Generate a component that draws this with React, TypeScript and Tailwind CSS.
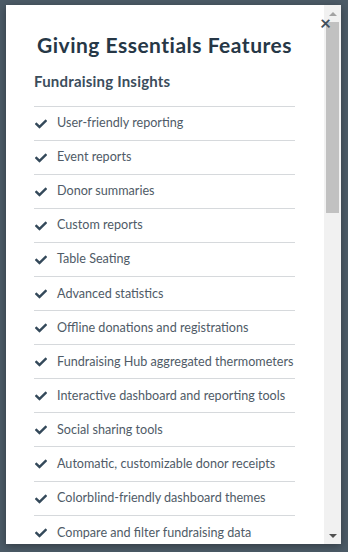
import React from "react";

const insights = [
  "User-friendly reporting",
  "Event reports",
  "Donor summaries",
  "Custom reports",
  "Table Seating",
  "Advanced statistics",
  "Offline donations and registrations",
  "Fundraising Hub aggregated thermometers",
  "Interactive dashboard and reporting tools",
  "Social sharing tools",
  "Automatic, customizable donor receipts",
  "Colorblind-friendly dashboard themes",
  "Compare and filter fundraising data",
];

function Check() {
  return (
    <svg viewBox="0 0 512 512" className="h-[12px] w-[12px] shrink-0 fill-[#34495a]">
      <path d="M173.9 439.4 7.5 273c-10-10-10-26.2 0-36.2l36.2-36.2c10-10 26.2-10 36.2 0L192 312.7 432.1 72.6c10-10 26.2-10 36.2 0l36.2 36.2c10 10 10 26.2 0 36.2L210.1 439.4c-10 10-26.2 10-36.2 0z" />
    </svg>
  );
}

function FeatureList({ title, items }: { title: string; items: string[] }) {
  return (
    <section>
      <h3 className="pb-[13px] text-[15px] font-bold tracking-[0.2px] text-[#3b4d5c]">{title}</h3>
      <ul className="border-t border-[#d6d9dc]">
        {items.map((item) => (
          <li
            key={item}
            className="flex h-[34.1px] items-center gap-[10px] border-b border-[#d6d9dc] pl-[1px] pt-[1px] last:border-b-0"
          >
            <Check />
            <span className="whitespace-nowrap text-[12.6px] text-[#4f5b67]">{item}</span>
          </li>
        ))}
      </ul>
    </section>
  );
}

export default function App() {
  return (
    <div className="h-screen w-full overflow-hidden bg-[#4c5b67] pl-[6px] pt-[5px] font-['Lato',sans-serif]">
      <div className="relative flex h-[539px] w-[335px] bg-white shadow-[0_2px_8px_rgba(0,0,0,0.35)]">
        <div className="min-w-0 flex-1 overflow-hidden">
          <div className="pl-[28px] pr-[29px] pt-[26px]">
            <h2 className="mb-[11px] text-center text-[21px] font-bold leading-[28px] tracking-[0.5px] text-[#263746]">
              Giving Essentials Features
            </h2>
            <FeatureList title="Fundraising Insights" items={insights} />
          </div>
        </div>

        {/* scrollbar */}
        <div className="flex w-[17px] shrink-0 flex-col items-center bg-[#f1f1f1]">
          <div className="flex h-[17px] items-center justify-center">
            <span className="h-0 w-0 border-x-[4px] border-b-[4px] border-x-transparent border-b-[#a3a3a3]" />
          </div>
          <div className="h-[191px] w-[13px] bg-[#c1c1c1]" />
          <div className="flex-1" />
          <div className="flex h-[17px] items-center justify-center">
            <span className="h-0 w-0 border-x-[4px] border-t-[4px] border-x-transparent border-t-[#505050]" />
          </div>
        </div>

        <button className="absolute left-[314px] top-[8px] text-[19px] font-bold leading-none text-[#3f4f5c]">
          ×
        </button>
      </div>
    </div>
  );
}
